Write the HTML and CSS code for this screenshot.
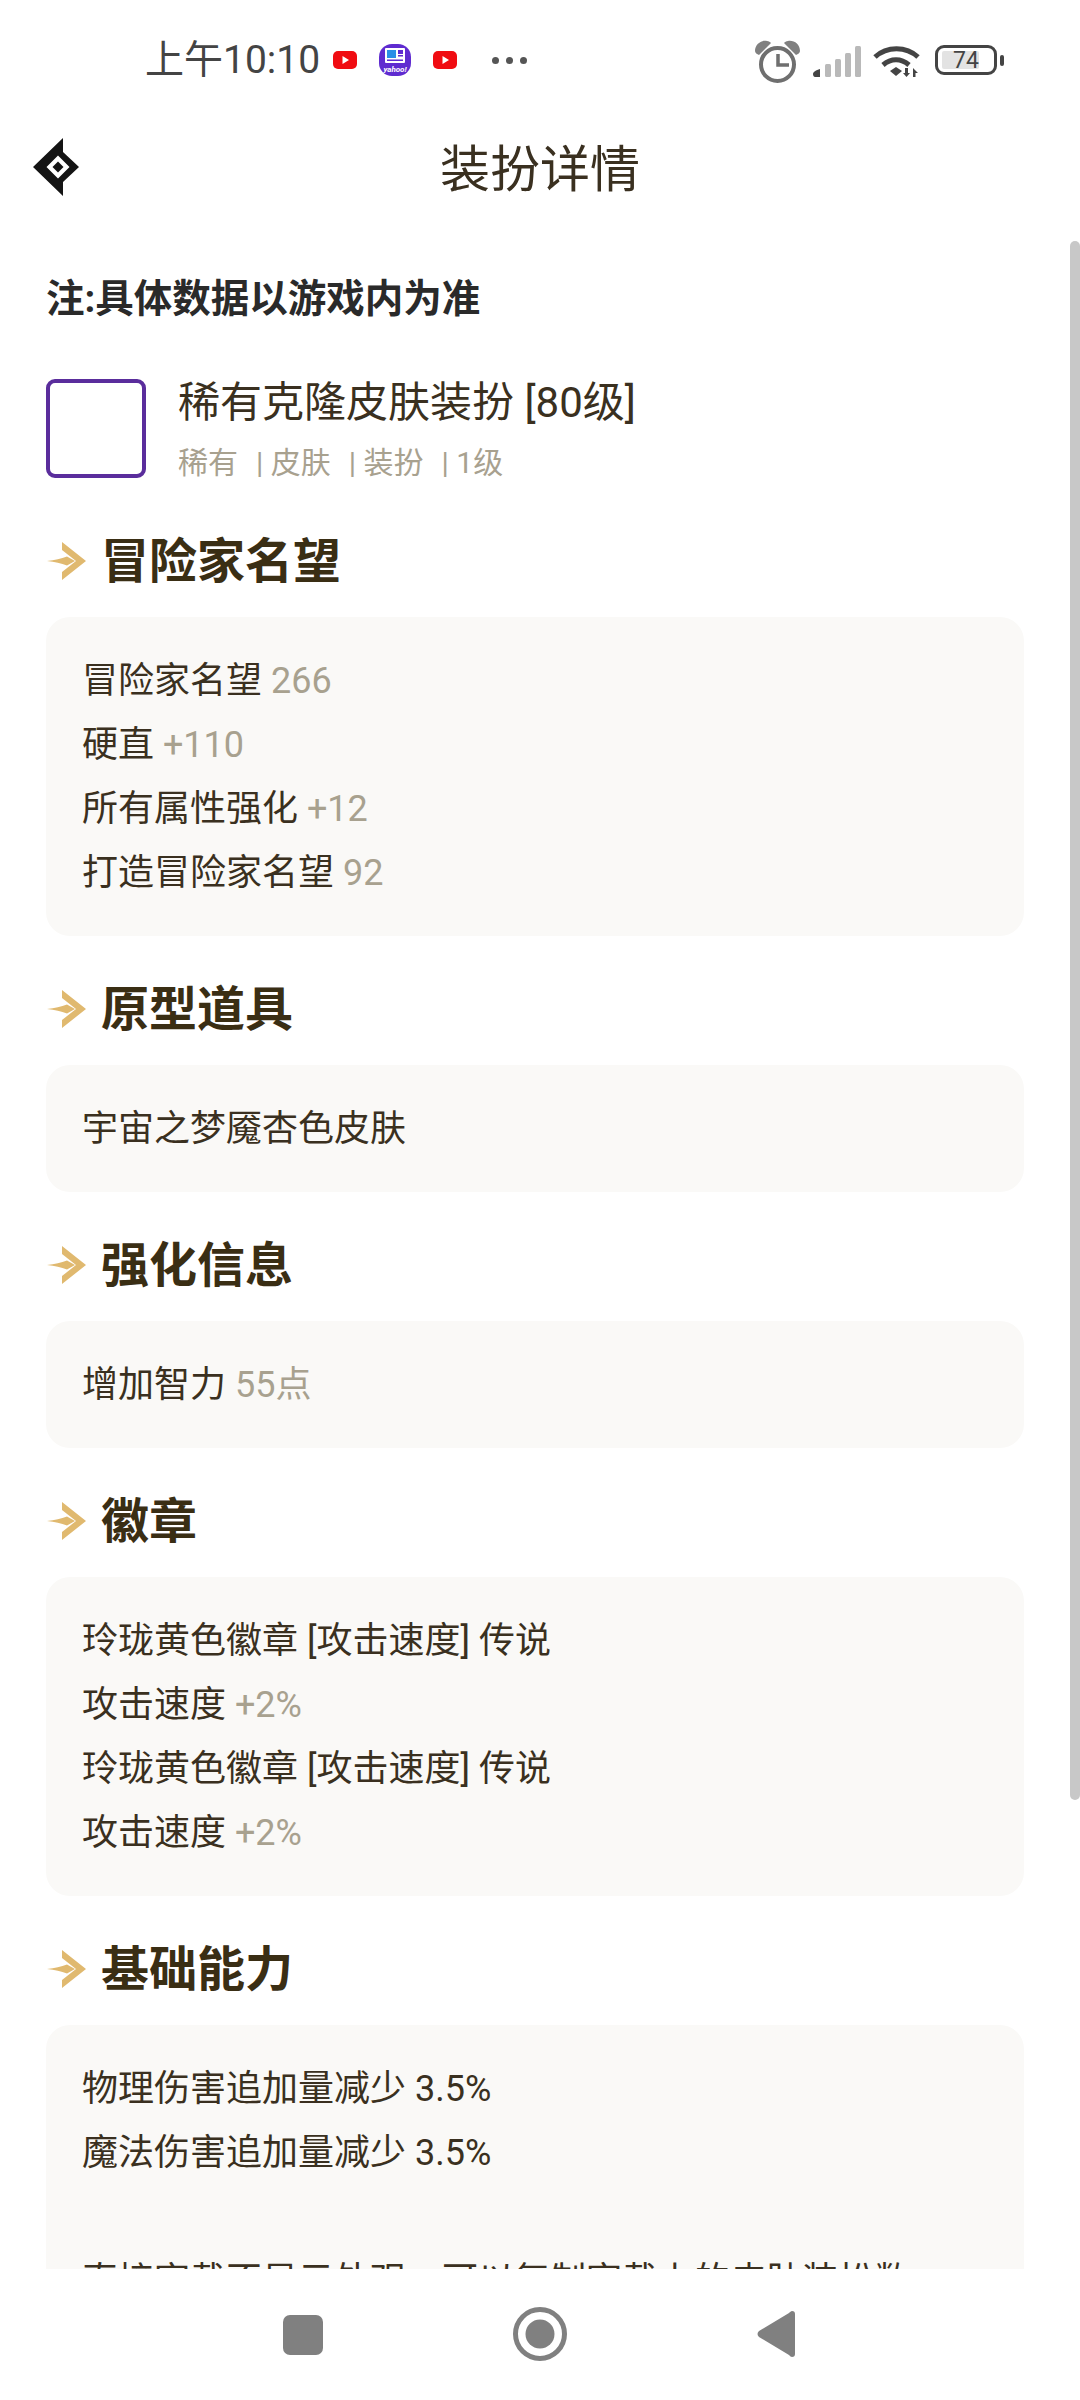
FILE: index.html
```html
<!DOCTYPE html>
<html lang="zh-CN">
<head>
  <meta charset="UTF-8">
  <meta name="viewport" content="width=device-width, initial-scale=1.0">
  <title>装扮详情</title>
  <link rel="stylesheet" href="styles.css">
</head>
<body>
  <div class="app">
    <!-- Status bar -->
    <div class="status-bar">
      <div class="status-left">
        <span class="clock">上午10:10</span>
        <svg class="ic-yt" viewBox="0 0 24 18"><rect width="24" height="18" rx="5" fill="#f00c12"/><path d="M9.5 5l6.5 4-6.5 4z" fill="#fff"/></svg>
        <svg class="ic-yahoo" viewBox="0 0 32 32">
          <rect width="32" height="32" rx="13" fill="#5f2bd0"/>
          <rect x="6" y="4" width="20" height="15" rx="1" fill="#fff"/>
          <rect x="8" y="6" width="9" height="8" fill="#2a8fe6"/>
          <rect x="19" y="6" width="5" height="4" fill="#5f2bd0"/>
          <rect x="19" y="11" width="5" height="1.5" fill="#5f2bd0"/>
          <rect x="8" y="15.5" width="16" height="1.5" fill="#5f2bd0"/>
          <text class="yahoo-text" x="16" y="28" text-anchor="middle">yahoo!</text>
        </svg>
        <svg class="ic-yt" viewBox="0 0 24 18"><rect width="24" height="18" rx="5" fill="#f00c12"/><path d="M9.5 5l6.5 4-6.5 4z" fill="#fff"/></svg>
        <span class="dots"><i></i><i></i><i></i></span>
      </div>
      <div class="status-right">
        <svg class="ic-alarm" viewBox="0 0 45 43">
          <circle cx="22.5" cy="24.5" r="16.5" fill="none" stroke="#6f6f6f" stroke-width="4"/>
          <path d="M23 14v11h11" fill="none" stroke="#6f6f6f" stroke-width="3.5"/>
          <path d="M0 11C0 4 6 0 12 1c2 0 3 1 4 2L4 15c-2-1-4-2-4-4zM45 11c0-7-6-11-12-10-2 0-3 1-4 2l12 12c2-1 4-2 4-4z" fill="#808080"/>
        </svg>
        <svg class="ic-signal" viewBox="0 0 48 31">
          <path d="M0 28c0-2 3-4 7-5v8H2c-1 0-2-1-2-3z" fill="#444"/>
          <rect x="12" y="18" width="6" height="13" rx="1.5" fill="#b9b9b9"/>
          <rect x="22" y="13" width="6" height="18" rx="1.5" fill="#b9b9b9"/>
          <rect x="32" y="7" width="6" height="24" rx="1.5" fill="#b9b9b9"/>
          <rect x="42" y="0" width="6" height="31" rx="1.5" fill="#b9b9b9"/>
        </svg>
        <svg class="ic-wifi" viewBox="0 0 47 33">
          <g fill="none" stroke="#444" stroke-width="5">
            <path d="M2 13c12-11 31-11 43 0"/>
            <path d="M10 21c8-7 18-7 26 0"/>
          </g>
          <path d="M17 27l6-4 6 4-6 5z" fill="#444"/>
          <path d="M32 24h3v5h2l-3.500 4-3.500-4h2zM40 33v-9l5 5h-2.500v4z" fill="#444"/>
        </svg>
        <div class="battery">
          <div class="battery-body"><span class="battery-fill"></span><span class="battery-num">74</span></div>
          <span class="battery-tip"></span>
        </div>
      </div>
    </div>

    <!-- Header -->
    <div class="top-bar">
      <svg class="logo" viewBox="0 0 46 58">
        <path fill-rule="evenodd" d="M30 0v14l16 15-16 15v14L0 29zM25 17.500L13.500 29 25 40.500 36.500 29z" fill="#141414"/>
        <path d="M25 23.500l5.500 5.500-5.500 5.500-5.500-5.500z" fill="#141414"/>
      </svg>
      <div class="top-title">装扮详情</div>
    </div>

    <!-- Content -->
    <div class="content">
      <div class="scroll-thumb"></div>
      <div class="note">注:具体数据以游戏内为准</div>

      <div class="item-row">
        <div class="item-icon"></div>
        <div class="item-info">
          <div class="item-name">稀有克隆皮肤装扮 [80级]</div>
          <div class="item-tags"><span>稀有</span><span>| 皮肤</span><span>| 装扮</span><span>| 1级</span></div>
        </div>
      </div>

      <div class="sec-head">
        <svg class="sec-arrow" viewBox="0 0 39 38"><path d="M15 0l24 19-24 19v-8l14-11-14-11z" fill="#e0b96f"/><path d="M0 19c8-1 14-2 20-4.500l8 4.500-8 4.500c-6-2.500-12-3.500-20-4.500z" fill="#e0b96f"/></svg>
        <h2>冒险家名望</h2>
      </div>
      <div class="card">
        <div class="line">冒险家名望 <span class="val">266</span></div>
        <div class="line">硬直 <span class="val">+110</span></div>
        <div class="line">所有属性强化 <span class="val">+12</span></div>
        <div class="line">打造冒险家名望 <span class="val">92</span></div>
      </div>

      <div class="sec-head">
        <svg class="sec-arrow" viewBox="0 0 39 38"><path d="M15 0l24 19-24 19v-8l14-11-14-11z" fill="#e0b96f"/><path d="M0 19c8-1 14-2 20-4.500l8 4.500-8 4.500c-6-2.500-12-3.500-20-4.500z" fill="#e0b96f"/></svg>
        <h2>原型道具</h2>
      </div>
      <div class="card">
        <div class="line">宇宙之梦魇杏色皮肤</div>
      </div>

      <div class="sec-head">
        <svg class="sec-arrow" viewBox="0 0 39 38"><path d="M15 0l24 19-24 19v-8l14-11-14-11z" fill="#e0b96f"/><path d="M0 19c8-1 14-2 20-4.500l8 4.500-8 4.500c-6-2.500-12-3.500-20-4.500z" fill="#e0b96f"/></svg>
        <h2>强化信息</h2>
      </div>
      <div class="card">
        <div class="line">增加智力 <span class="val">55点</span></div>
      </div>

      <div class="sec-head">
        <svg class="sec-arrow" viewBox="0 0 39 38"><path d="M15 0l24 19-24 19v-8l14-11-14-11z" fill="#e0b96f"/><path d="M0 19c8-1 14-2 20-4.500l8 4.500-8 4.500c-6-2.500-12-3.500-20-4.500z" fill="#e0b96f"/></svg>
        <h2>徽章</h2>
      </div>
      <div class="card">
        <div class="line">玲珑黄色徽章 [攻击速度] 传说</div>
        <div class="line">攻击速度 <span class="val">+2%</span></div>
        <div class="line">玲珑黄色徽章 [攻击速度] 传说</div>
        <div class="line">攻击速度 <span class="val">+2%</span></div>
      </div>

      <div class="sec-head">
        <svg class="sec-arrow" viewBox="0 0 39 38"><path d="M15 0l24 19-24 19v-8l14-11-14-11z" fill="#e0b96f"/><path d="M0 19c8-1 14-2 20-4.500l8 4.500-8 4.500c-6-2.500-12-3.500-20-4.500z" fill="#e0b96f"/></svg>
        <h2>基础能力</h2>
      </div>
      <div class="card">
        <div class="line">物理伤害追加量减少 3.5%</div>
        <div class="line">魔法伤害追加量减少 3.5%</div>
        <div class="line line-blank"></div>
        <div class="line">直接穿戴不显示外观，可以复制穿戴上的皮肤装扮数</div>
      </div>
    </div>

    <!-- Navigation bar -->
    <div class="nav-bar">
      <svg class="nav-square" viewBox="0 0 40 40"><rect width="40" height="40" rx="7" fill="#808080"/></svg>
      <svg class="nav-home" viewBox="0 0 54 54"><circle cx="27" cy="27" r="24.5" fill="none" stroke="#808080" stroke-width="5"/><circle cx="27" cy="27" r="14.5" fill="#808080"/></svg>
      <svg class="nav-back" viewBox="0 0 38 46"><path d="M35 0c2 0 3 1 3 3v40c0 2-1 3-3 3-1 0-2-1-3-2L2 26c-2-2-2-4 0-6L32 2c1-1 2-2 3-2z" fill="#808080"/></svg>
    </div>
  </div>
</body>
</html>
```
FILE: styles.css
```css
* {
  box-sizing: border-box;
}

body {
  margin: 0;
  padding: 0;
  background-color: #fff;
  font-family: Roboto, "Noto Sans CJK SC", sans-serif;
  color: #3a3020;
}

.app {
  width: 1080px;
  height: 2400px;
  display: flex;
  flex-direction: column;
  overflow: hidden;
}

/* status bar */
.status-bar {
  height: 120px;
  flex-shrink: 0;
  display: flex;
  justify-content: space-between;
  align-items: center;
  padding: 0 76px 0 145px;
}

.status-left {
  display: flex;
  align-items: center;
}

.clock {
  font-size: 39px;
  color: #444;
  line-height: 1;
}

.ic-yt {
  width: 24px;
  height: 18px;
  margin-left: 13px;
}

.ic-yahoo {
  width: 32px;
  height: 32px;
  margin-left: 22px;
}

.yahoo-text {
  font-family: Roboto, sans-serif;
  font-size: 8px;
  font-weight: 700;
  font-style: italic;
  fill: #fff;
}

.ic-yahoo + .ic-yt {
  margin-left: 22px;
}

.dots {
  display: flex;
  gap: 7px;
  margin-left: 35px;
}

.dots i {
  width: 7px;
  height: 7px;
  border-radius: 50%;
  background-color: #555;
}

.status-right {
  display: flex;
  align-items: center;
}

.ic-alarm {
  width: 45px;
  height: 43px;
  margin-top: 2px;
}

.ic-signal {
  width: 48px;
  height: 31px;
  margin-left: 13px;
  margin-top: 2px;
}

.ic-wifi {
  width: 47px;
  height: 33px;
  margin-left: 12px;
  margin-top: 1px;
}

.battery {
  display: flex;
  align-items: center;
  margin-left: 15px;
}

.battery-body {
  position: relative;
  width: 62px;
  height: 30px;
  border: 3px solid #444;
  border-radius: 9px;
  display: flex;
  align-items: center;
  justify-content: center;
}

.battery-fill {
  position: absolute;
  left: 4px;
  top: 3px;
  bottom: 3px;
  width: 37px;
  background-color: #e3e3e3;
  border-radius: 2px;
}

.battery-num {
  position: relative;
  font-size: 23px;
  color: #444;
}

.battery-tip {
  width: 4px;
  height: 11px;
  margin-left: 3px;
  background-color: #444;
  border-radius: 2px;
}

/* top bar */
.top-bar {
  position: relative;
  height: 90px;
  flex-shrink: 0;
  display: flex;
  align-items: center;
  justify-content: center;
}

.logo {
  position: absolute;
  left: 33px;
  top: 18px;
  width: 46px;
  height: 58px;
}

.top-title {
  font-size: 50px;
  font-weight: 400;
  color: #3a3020;
}

/* content */
.content {
  position: relative;
  flex: 1;
  overflow: hidden;
  padding: 30px 46px 0;
}

.scroll-thumb {
  position: absolute;
  right: 0;
  top: 31px;
  width: 10px;
  height: 1559px;
  background-color: #c8c8c8;
  border-radius: 5px;
}

.note {
  font-size: 38.5px;
  font-weight: 700;
  color: #2a2a2a;
  line-height: 56px;
  margin-top: 31px;
}

.item-row {
  display: flex;
  align-items: flex-start;
  margin-top: 52px;
  padding-bottom: 6px;
}

.item-icon {
  width: 100px;
  height: 99px;
  border: 4px solid #5a2d9c;
  border-radius: 9px;
  flex-shrink: 0;
}

.item-info {
  margin-left: 32px;
  margin-top: -3px;
}

.item-name {
  font-size: 42px;
  line-height: 54px;
  font-weight: 400;
  color: #3a3020;
}

.item-tags {
  display: flex;
  gap: 18px;
  margin-top: 14px;
  font-size: 30px;
  line-height: 38px;
  color: #a8a18f;
}

.sec-head {
  display: flex;
  align-items: center;
  height: 72px;
  margin-top: 33px;
  margin-bottom: 24px;
}

.sec-arrow {
  width: 39px;
  height: 38px;
  margin-left: 1px;
  margin-top: 8px;
  flex-shrink: 0;
}

.sec-head h2 {
  margin: 0 0 0 15px;
  font-size: 48px;
  font-weight: 700;
  color: #3a2e14;
}

.card {
  width: 978px;
  padding: 32px 36px 31px;
  background-color: #faf9f7;
  border-radius: 24px;
}

.line {
  font-size: 36px;
  line-height: 64px;
  font-weight: 400;
  color: #3a3020;
  white-space: nowrap;
}

.line-blank {
  height: 64px;
}

.val {
  color: #a8a18f;
}

/* nav bar */
.nav-bar {
  position: relative;
  height: 131px;
  flex-shrink: 0;
  background-color: #fff;
}

.nav-square {
  position: absolute;
  left: 283px;
  top: 46px;
  width: 40px;
  height: 40px;
}

.nav-home {
  position: absolute;
  left: 513px;
  top: 38px;
  width: 54px;
  height: 54px;
}

.nav-back {
  position: absolute;
  left: 757px;
  top: 42px;
  width: 38px;
  height: 46px;
}
```
